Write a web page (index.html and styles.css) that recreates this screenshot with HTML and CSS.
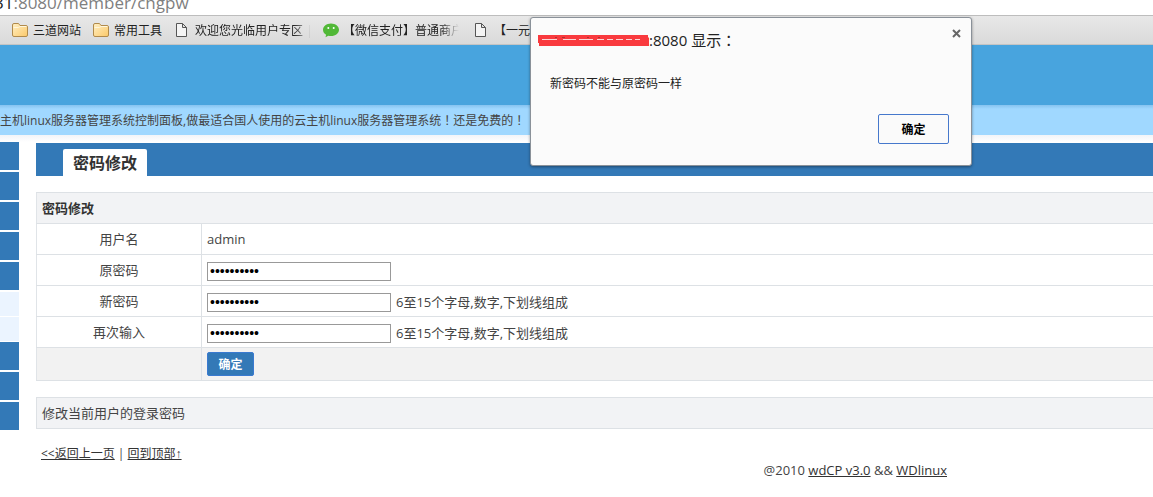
FILE: index.html
```html
<!DOCTYPE html>
<html lang="zh-CN">
<head>
  <meta charset="UTF-8">
  <meta name="viewport" content="width=device-width, initial-scale=1.0">
  <title>密码修改</title>
  <link rel="stylesheet" href="styles.css">
</head>
<body>
  <!-- Address bar -->
  <div class="address"><span class="host">31</span>:8080/member/chgpw</div>

  <!-- Bookmarks -->
  <nav class="bookmarks">
    <a class="bookmark folder" href="#">
      <svg width="16" height="14" viewBox="0 0 16 14">
        <defs>
          <linearGradient id="folder" x1="0" y1="0" x2="1" y2="1">
            <stop offset="0" stop-color="#ffefc4"/>
            <stop offset="1" stop-color="#fbc96a"/>
          </linearGradient>
        </defs>
        <path d="M.5 2Q.5.5 2 .5H6.500L8 2.500H14Q15.500 2.500 15.500 4V12Q15.500 13.500 14 13.500H2Q.5 13.500 .5 12Z" fill="url(#folder)" stroke="#b08a4c"/>
        <path d="M1.500 4.500H6.500L8 3.500H14.500" fill="none" stroke="#fff6dc"/>
      </svg>
      <span>三道网站</span>
    </a>
    <a class="bookmark folder" href="#">
      <svg width="16" height="14" viewBox="0 0 16 14">
        <path d="M.5 2Q.5.5 2 .5H6.500L8 2.500H14Q15.500 2.500 15.500 4V12Q15.500 13.500 14 13.500H2Q.5 13.500 .5 12Z" fill="url(#folder)" stroke="#b08a4c"/>
        <path d="M1.500 4.500H6.500L8 3.500H14.500" fill="none" stroke="#fff6dc"/>
      </svg>
      <span>常用工具</span>
    </a>
    <a class="bookmark site" href="#">
      <svg width="11" height="14" viewBox="0 0 11 14">
        <path d="M.5.5H6.500L10.500 4.500V13.500H.5ZM6.500 .5V4.500H10.500" fill="#f4f4f4" stroke="#555"/>
      </svg>
      <span class="fade">欢迎您光临用户专区 |</span>
    </a>
    <a class="bookmark wechat" href="#">
      <svg width="16" height="15" viewBox="0 0 16 15">
        <path d="M8 .5C3.600 .5 0 3.300 0 6.800C0 8.900 1.200 10.700 3.100 11.800L2.500 14.300L5.300 12.800C6.100 13 7 13.100 8 13.100C12.400 13.100 16 10.300 16 6.800S12.400.5 8 .5Z" fill="#51b837"/>
        <circle cx="5.300" cy="5" r="1" fill="#fff"/>
        <circle cx="10.700" cy="5" r="1" fill="#fff"/>
      </svg>
      <span class="fade">【微信支付】普通商户</span>
    </a>
    <a class="bookmark site" href="#">
      <svg width="11" height="14" viewBox="0 0 11 14">
        <path d="M.5.5H6.500L10.500 4.500V13.500H.5ZM6.500 .5V4.500H10.500" fill="#f4f4f4" stroke="#555"/>
      </svg>
      <span>【一元</span>
    </a>
  </nav>

  <header class="banner"></header>
  <div class="notice">主机linux服务器管理系统控制面板,做最适合国人使用的云主机linux服务器管理系统<span class="punct">！</span>还是免费的<span class="punct">！</span></div>

  <div class="page">
    <!-- Side menu -->
    <ul class="side">
      <li></li>
      <li></li>
      <li></li>
      <li></li>
      <li></li>
      <li class="sub"></li>
      <li class="sub"></li>
      <li></li>
      <li></li>
      <li></li>
    </ul>

    <main class="content">
      <div class="tabs"><h1 class="tab">密码修改</h1></div>

      <form onsubmit="return false">
        <table class="form-table">
          <thead>
            <tr><th colspan="2">密码修改</th></tr>
          </thead>
          <tbody>
            <tr>
              <td class="name">用户名</td>
              <td>admin</td>
            </tr>
            <tr>
              <td class="name"><label for="oldpw">原密码</label></td>
              <td><input class="text" type="password" id="oldpw" value="1234567890"></td>
            </tr>
            <tr>
              <td class="name"><label for="newpw">新密码</label></td>
              <td><input class="text" type="password" id="newpw" value="1234567890"><span class="hint">6至15个字母,数字,下划线组成</span></td>
            </tr>
            <tr>
              <td class="name"><label for="newpw2">再次输入</label></td>
              <td><input class="text" type="password" id="newpw2" value="1234567890"><span class="hint">6至15个字母,数字,下划线组成</span></td>
            </tr>
            <tr class="submit-row">
              <td class="name"></td>
              <td><button class="btn" type="submit">确定</button></td>
            </tr>
          </tbody>
        </table>
      </form>

      <p class="info">修改当前用户的登录密码</p>
      <p class="links"><a href="#">&lt;&lt;返回上一页</a> | <a href="#">回到顶部↑</a></p>
      <footer class="footer">@2010 <a href="#">wdCP v3.0</a> &amp;&amp; <a href="#">WDlinux</a></footer>
    </main>
  </div>

  <!-- Alert box -->
  <div class="alert" role="alertdialog" aria-labelledby="alertTitle">
    <div class="alert-head">
      <svg class="mask" width="111" height="13" viewBox="0 0 111 13">
        <path d="M0 1H110V3L111 4V12H1V9H0Z" fill="#f93a3e"/>
        <path d="M4 5.500H19M25 5.500H38M41 5.500H55M59 5.500H66M69 5.500H75M78 5.500H85M88 5.500H94M97 5.500H102" stroke="#fbd5d5"/>
        <path d="M17 3.500H19M24 3.500H27M49 3.500H51M60 3.500H62" stroke="#a33"/>
      </svg>
      <span id="alertTitle">:8080 显示<span class="punct">：</span></span>
      <button class="close" type="button" aria-label="关闭">
        <svg width="9" height="9" viewBox="0 0 9 9"><path d="M1 1L8 8M8 1L1 8" stroke="#666" stroke-width="2"/></svg>
      </button>
    </div>
    <p class="alert-text">新密码不能与原密码一样</p>
    <div class="alert-foot"><button class="alert-ok" type="button">确定</button></div>
  </div>
</body>
</html>
```
FILE: styles.css
```css
* {
  box-sizing: border-box;
}

body {
  margin: 0;
  font-family: "Open Sans", "Noto Sans CJK SC", sans-serif;
  font-size: 12px;
  color: #444;
  background: #fff;
}

a {
  color: #333;
}

/* centred full-width punctuation */
.punct {
  font-family: "Noto Sans CJK TC", sans-serif;
  font-feature-settings: "locl" 0;
  line-height: 1;
}

/* Browser bars */
.address {
  display: flex;
  align-items: flex-end;
  height: 15px;
  overflow: hidden;
  font-size: 17px;
  line-height: 24px;
  color: #808080;
}

.host {
  margin-left: -6px;
  color: #222;
}

.bookmarks {
  display: flex;
  align-items: center;
  height: 30px;
  padding-left: 12px;
  overflow: hidden;
  white-space: nowrap;
  background: linear-gradient(#e8e8e8, #dadada);
  border-top: 1px solid #bdbdbd;
  border-bottom: 1px solid #c4c4c4;
}

.bookmark {
  display: flex;
  align-items: center;
  gap: 5px;
  flex: none;
  margin-right: 12px;
  color: #222;
  text-decoration: none;
}

.site {
  gap: 8px;
  margin-left: 2px;
}

.site:last-child {
  margin-left: 4px;
}

.fade {
  width: 116px;
  overflow: hidden;
  -webkit-mask-image: linear-gradient(to right, #000 85%, transparent);
  mask-image: linear-gradient(to right, #000 85%, transparent);
}

.wechat {
  gap: 4px;
}

/* Page header */
.banner {
  height: 60px;
  background: #48a4de;
}

.notice {
  height: 30px;
  line-height: 32px;
  overflow: hidden;
  white-space: nowrap;
  background: linear-gradient(#86c3f0, #a0d8ff 4px);
}

.page {
  display: flex;
  gap: 17px;
  padding-top: 7px;
  background: linear-gradient(#f2f4f8, #fff 7px);
}

.side {
  flex: none;
  width: 19px;
  margin: 0;
  padding: 0;
  list-style: none;
}

.side li {
  height: 28px;
  margin-bottom: 2px;
  background: #3379b7;
}

.side .sub {
  height: 24px;
  margin-bottom: 1px;
  background: #ebf4ff;
}

.content {
  flex: 1;
  min-width: 0;
  padding-top: 1px;
  font-size: 13px;
}

.tabs {
  display: flex;
  align-items: flex-end;
  height: 33px;
  margin-bottom: 16px;
  padding-left: 27px;
  background: #3379b7;
}

.tab {
  height: 27px;
  margin: 0;
  padding: 0 10px;
  font-size: 16px;
  line-height: 28px;
  color: #333;
  background: #fff;
  border-radius: 2px 2px 0 0;
}

/* Password form */
.form-table {
  width: 100%;
  border-collapse: collapse;
  border-left: 1px solid #e0e4e8;
}

.form-table th,
.form-table td {
  height: 31px;
  padding: 0 5px;
  line-height: 20px;
  text-align: left;
  border-top: 1px solid #dde1e5;
  border-bottom: 1px solid #dde1e5;
}

.form-table th {
  color: #333;
  background: #f2f3f5;
}

.form-table .name {
  width: 165px;
  text-align: center;
  border-right: 1px solid #dde1e5;
}

.form-table .submit-row td {
  height: 33px;
  background: #f2f2f2;
}

.text {
  width: 184px;
  height: 19px;
  padding: 0 2px;
  font-family: "Liberation Sans", sans-serif;
  font-size: 14px;
  color: #000;
  vertical-align: middle;
  background: #fff;
  border: 1px solid #999;
}

.hint {
  margin-left: 5px;
  line-height: 18px;
  vertical-align: middle;
}

.btn {
  display: block;
  width: 47px;
  height: 24px;
  padding: 0;
  font-family: inherit;
  font-size: 12px;
  font-weight: bold;
  color: #fff;
  background: #3379b7;
  border: 1px solid #3a7ad0;
  border-radius: 2px;
}

.info {
  height: 32px;
  margin: 16px 0 0;
  padding: 0 5px;
  line-height: 30px;
  background: #f2f3f5;
  border: 1px solid #dde1e5;
  border-right: none;
}

.links {
  margin: 17px 0 0;
  padding-left: 5px;
  font-family: "Open Sans", "Liberation Sans", "Noto Sans CJK SC", sans-serif;
  font-size: 12px;
  line-height: 16px;
}

.footer {
  padding-right: 206px;
  line-height: 16px;
  text-align: right;
}

/* Alert box */
.alert {
  position: absolute;
  top: 17px;
  left: 530px;
  width: 442px;
  height: 149px;
  padding: 12px 22px 0 7px;
  color: #222;
  background: #fbfbfb;
  border: 1px solid #8a9199;
  border-radius: 3px;
  box-shadow: 0 1px 3px rgba(0, 0, 0, 0.4);
}

.alert-head {
  display: flex;
  align-items: center;
  height: 20px;
  font-size: 15px;
  line-height: 20px;
}

.close {
  position: absolute;
  top: 11px;
  right: 10px;
  padding: 0;
  line-height: 0;
  background: none;
  border: none;
}

.alert-text {
  margin: 25px 0 0 12px;
  line-height: 18px;
}

.alert-foot {
  display: flex;
  justify-content: flex-end;
  margin-top: 21px;
}

.alert-ok {
  width: 71px;
  height: 30px;
  padding: 0;
  font-family: inherit;
  font-size: 12px;
  font-weight: bold;
  color: #000;
  background: #fafafa;
  border: 1px solid #4678cc;
  border-radius: 2px;
}
```
